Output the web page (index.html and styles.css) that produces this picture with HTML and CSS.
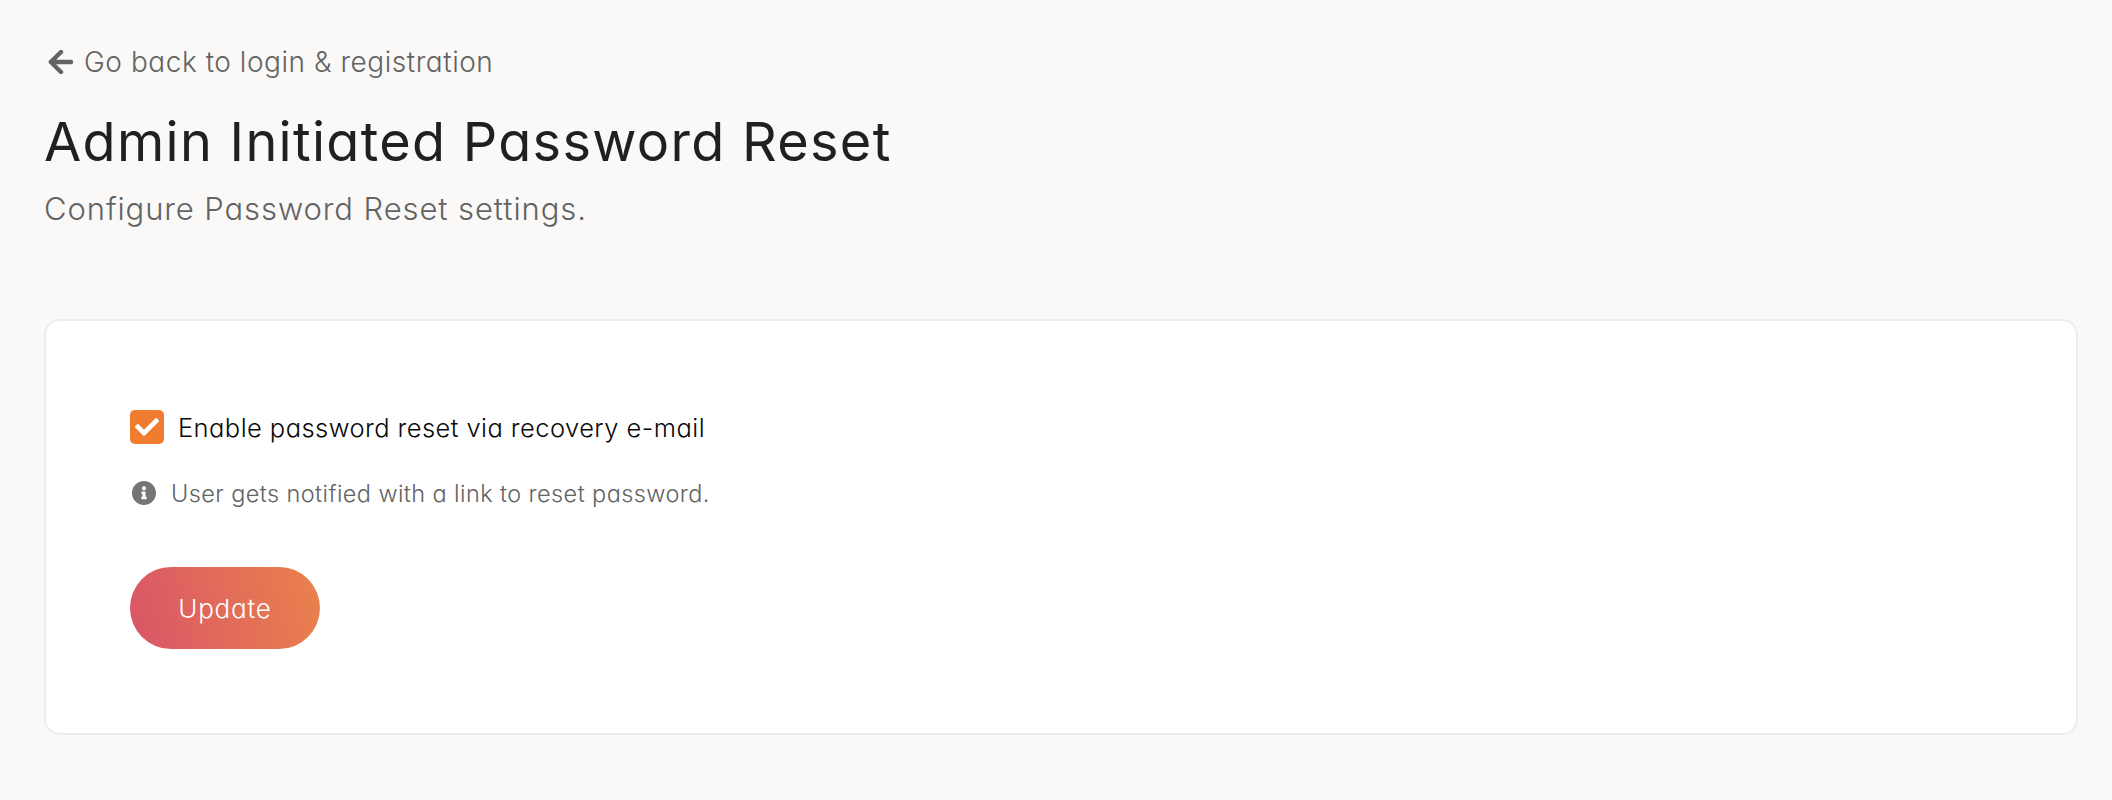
FILE: index.html
```html
<!DOCTYPE html>
<html lang="en">
<head>
<meta charset="utf-8">
<title>Admin Initiated Password Reset</title>
<link rel="stylesheet" href="styles.css">
</head>
<body>
<main class="page">
  <a class="back">
    <svg class="back-icon" viewBox="0 0 25 24" aria-hidden="true"><path d="M13 2 L2.8 12 L13 22 M3.5 12 H23"/></svg>
    <span class="back-text">Go back to login &amp; registration</span>
  </a>
  <h1 class="title">Admin Initiated Password Reset</h1>
  <p class="subtitle">Configure Password Reset settings.</p>
  <section class="card">
    <label class="option">
      <span class="checkbox">
        <svg class="check-icon" viewBox="0 0 512 512" aria-hidden="true"><path d="M173.898 439.404l-166.4-166.4c-9.997-9.997-9.997-26.206 0-36.204l36.203-36.204c9.997-9.998 26.207-9.998 36.204 0L192 312.69 432.095 72.596c9.997-9.997 26.207-9.997 36.204 0l36.203 36.204c9.997 9.997 9.997 26.206 0 36.204l-294.4 294.401c-9.998 9.997-26.207 9.997-36.204-.001z"/></svg>
      </span>
      <span class="option-text">Enable password reset via recovery e-mail</span>
    </label>
    <p class="hint">
      <svg class="info-icon" viewBox="8 8 496 496" aria-hidden="true"><path d="M256 8C119.043 8 8 119.083 8 256c0 136.997 111.043 248 248 248s248-111.003 248-248C504 119.083 392.957 8 256 8zm0 110c23.196 0 42 18.804 42 42s-18.804 42-42 42-42-18.804-42-42 18.804-42 42-42zm56 254c0 6.627-5.373 12-12 12h-88c-6.627 0-12-5.373-12-12v-24c0-6.627 5.373-12 12-12h12v-64h-12c-6.627 0-12-5.373-12-12v-24c0-6.627 5.373-12 12-12h64c6.627 0 12 5.373 12 12v100h12c6.627 0 12 5.373 12 12v24z"/></svg>
      <span class="hint-text">User gets notified with a link to reset password.</span>
    </p>
    <button class="update" type="button">Update</button>
  </section>
</main>
</body>
</html>
```
FILE: styles.css
```css
* { box-sizing: border-box; }

body {
  margin: 0;
  min-height: 800px;
  background: #faf9f7;
  font-family: Inter, "Open Sans", sans-serif;
  font-feature-settings: "cv11" 1;
  font-weight: 300;
}

.page {
  display: flex;
  flex-direction: column;
  align-items: stretch;
  padding: 42px 34px 0 44px;
}

.back {
  display: flex;
  align-items: center;
  gap: 11px;
  height: 40px;
  padding-left: 4px;
  color: #636363;
  font-size: 28px;
  letter-spacing: 0.54px;
  line-height: 40px;
  white-space: nowrap;
}

.back-icon {
  width: 25px;
  height: 24px;
  fill: none;
  stroke: #636363;
  stroke-width: 4.4;
  stroke-linecap: round;
  stroke-linejoin: round;
}

.title {
  margin: 28px 0 0;
  color: #20201f;
  font-size: 54px;
  font-weight: 400;
  letter-spacing: 1.3px;
  line-height: 64px;
  white-space: nowrap;
}

.subtitle {
  margin: 15px 0 0;
  color: #636363;
  font-size: 31px;
  letter-spacing: 0.9px;
  line-height: 40px;
  white-space: nowrap;
}

.card {
  height: 416px;
  margin-top: 90px;
  padding: 89px 84px 84px;
  border: 2px solid #ebedef;
  border-radius: 16px;
  background: #fff;
}

.option {
  display: flex;
  align-items: center;
  gap: 14px;
  height: 34px;
  color: #080808;
  font-size: 25.5px;
  letter-spacing: 0.44px;
  line-height: 34px;
}

.option-text {
  padding-top: 2px;
}

.checkbox {
  display: flex;
  align-items: center;
  justify-content: center;
  width: 34px;
  height: 34px;
  border-radius: 5px;
  background: #f07c30;
}

.check-icon {
  width: 24px;
  height: 24px;
  fill: #fff;
}

.hint {
  display: flex;
  align-items: center;
  gap: 15px;
  margin: 33px 0 0;
  padding-left: 2px;
  color: #636363;
  font-size: 23.5px;
  letter-spacing: 0.41px;
  line-height: 34px;
}

.info-icon {
  width: 24px;
  height: 24px;
  margin-bottom: 2px;
  fill: #757575;
}

.update {
  display: block;
  width: 190px;
  height: 82px;
  margin-top: 56px;
  padding: 2px 0 0;
  border: 0;
  border-radius: 41px;
  background: linear-gradient(75deg, #d95568, #ea824c);
  color: #fff;
  font: inherit;
  font-feature-settings: inherit;
  font-size: 26px;
  letter-spacing: 0.8px;
  line-height: 80px;
}
```
